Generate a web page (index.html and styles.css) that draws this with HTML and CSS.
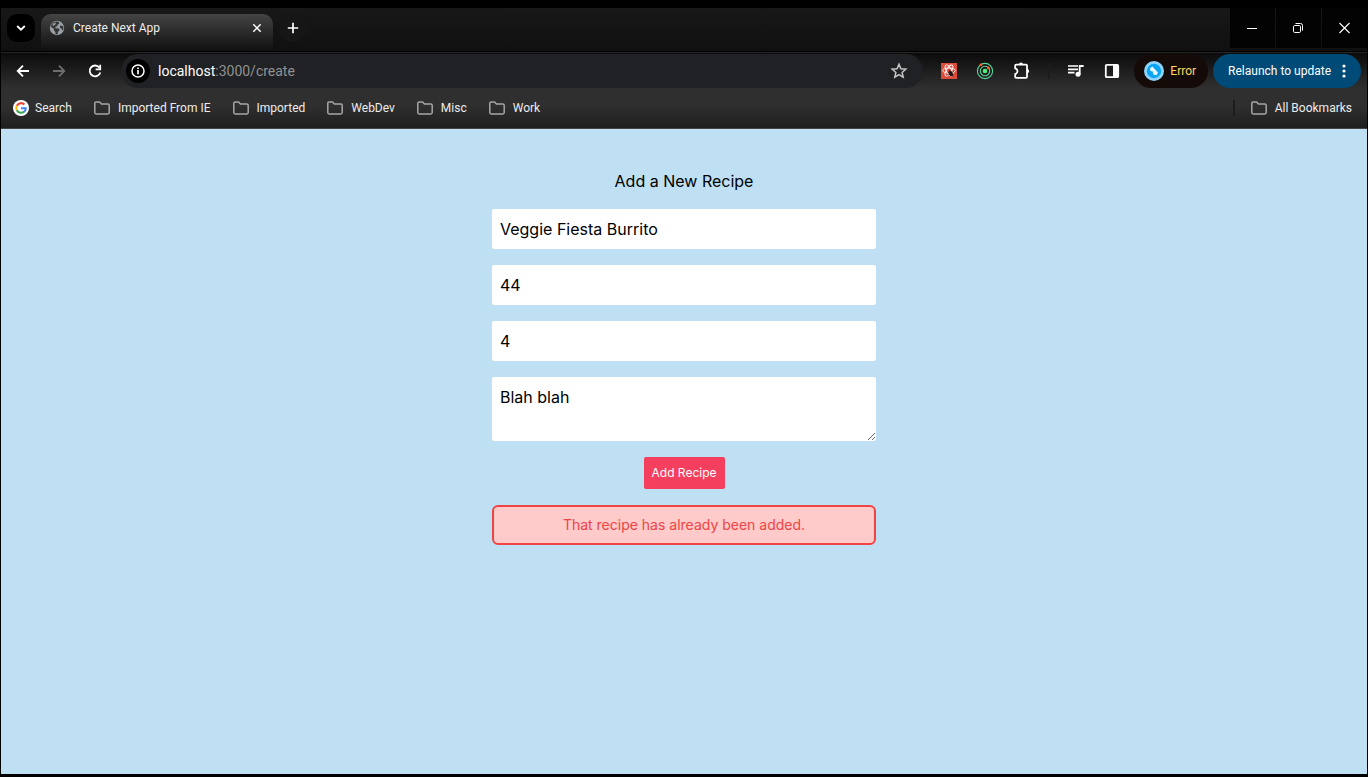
FILE: index.html
```html
<!DOCTYPE html>
<html lang="en">
<head>
<meta charset="utf-8">
<meta name="viewport" content="width=device-width, initial-scale=1">
<title>Create Next App</title>
<link rel="stylesheet" href="styles.css">
</head>
<body>
<svg class="sprite" aria-hidden="true">
  <symbol id="folder" viewBox="0 0 16 14"><path d="M.8 2.2Q.8.9 2.1.9H5.6L7.4 2.9H13.8Q15.2 2.9 15.2 4.3V11.6Q15.2 13 13.8 13H2.2Q.8 13 .8 11.6Z" fill="none" stroke="#a6a6a6" stroke-width="1.5" stroke-linejoin="round"/></symbol>
</svg>
<div class="window">
  <header class="chrome">
    <div class="tab-strip">
      <button class="tab-search" aria-label="Search tabs"><svg width="10" height="6" viewBox="0 0 10 6"><path d="M1.2 1 5 4.7 8.8 1" fill="none" stroke="#fff" stroke-width="1.8"/></svg></button>
      <div class="tab">
        <svg width="16" height="16" viewBox="0 0 16 16"><circle cx="8" cy="8" r="7.2" fill="#9aa0a6"/><path d="M7 1.6 9.8 1.7 10.2 3.6 8.3 5V6.3L6.4 6.8V8.2L9.8 8.6 10.7 10.3 9 11.8 8.6 14.4Q7.2 14.6 6.4 14V11.9L4.9 10.4V9L1.7 6.4Q2.7 2.6 7 1.6ZM11.6 5.2 14.2 6.4Q14.8 8.9 13.8 10.7L12.3 8.5 10.7 7.5Z" fill="#343536"/><path d="M4.2 3.4 6.9 2.6 6.4 4.6 4.8 5.7 3.2 5.3Z" fill="#9aa0a6"/></svg>
        <span class="tab-title">Create Next App</span>
        <button class="plain" aria-label="Close tab"><svg width="10" height="10" viewBox="0 0 10 10"><path d="M1.3 1.3 8.7 8.7M8.7 1.3 1.3 8.7" stroke="#fff" stroke-width="1.5"/></svg></button>
      </div>
      <button class="new-tab" aria-label="New tab"><svg width="12" height="12" viewBox="0 0 12 12"><path d="M6 .8V11.2M.8 6H11.2" stroke="#fff" stroke-width="1.7"/></svg></button>
      <div class="window-controls">
        <button aria-label="Minimize"><svg width="12" height="12" viewBox="0 0 12 12"><path d="M0 6.5H10" stroke="#fff"/></svg></button>
        <button aria-label="Restore"><svg width="12" height="12" viewBox="0 0 12 12"><g fill="none" stroke="#fff"><rect x=".5" y="3.5" width="7" height="7" rx="1.2"/><path d="M2.5 1.5H7.5Q9.5 1.5 9.5 3.5V8.5"/></g></svg></button>
        <button aria-label="Close"><svg width="12" height="12" viewBox="0 0 12 12"><path d="M.5 1 10.5 11M10.5 1 .5 11" stroke="#fff" stroke-width="1.1"/></svg></button>
      </div>
    </div>

    <div class="toolbar">
      <nav class="history" aria-label="History">
        <button aria-label="Back"><svg width="14" height="14" viewBox="0 0 14 14"><path d="M13 7H2M7 1.6 1.7 7 7 12.4" fill="none" stroke="#fff" stroke-width="1.8"/></svg></button>
        <button aria-label="Forward"><svg width="14" height="14" viewBox="0 0 14 14"><path d="M1 7H12M7 1.6 12.3 7 7 12.4" fill="none" stroke="#6e6e6e" stroke-width="1.8"/></svg></button>
        <button aria-label="Reload"><svg width="14" height="14" viewBox="0 0 14 14"><path d="M11.4 3.6A5.4 5.4 0 1 0 12.3 8.4" fill="none" stroke="#fff" stroke-width="1.8"/><path d="M12.2.8V5.3H7.6" fill="none" stroke="#fff" stroke-width="1.8"/></svg></button>
      </nav>
      <div class="omnibox">
        <button class="site-info" aria-label="View site information"><svg width="14" height="14" viewBox="0 0 14 14"><circle cx="7" cy="7" r="6" fill="none" stroke="#fff" stroke-width="1.5"/><path d="M7 6V10.3M7 3.5V5.1" stroke="#fff" stroke-width="1.7"/></svg></button>
        <div class="address" role="textbox" aria-label="Address"><span class="host">localhost</span>:3000/create</div>
        <button class="plain" aria-label="Bookmark this tab"><svg width="18" height="18" viewBox="0 0 18 18"><path d="M9 2.3 10.9 6.8 15.8 7.2 12.1 10.4 13.2 15.2 9 12.6 4.8 15.2 5.9 10.4 2.2 7.2 7.1 6.8Z" fill="none" stroke="#c4c7c5" stroke-width="1.5"/></svg></button>
      </div>
      <div class="extensions">
        <button aria-label="React extension"><svg width="16" height="16" viewBox="0 0 16 16"><path fill="#dd4b39" d="M0 0H16V16H0Z"/><g fill="none" stroke="#fff" stroke-width=".9"><ellipse cx="8" cy="7.5" rx="6.4" ry="2.5"/><ellipse cx="8" cy="7.5" rx="6.2" ry="2.5" transform="rotate(60 8 7.5)"/><ellipse cx="8" cy="7.5" rx="6.2" ry="2.5" transform="rotate(120 8 7.5)"/></g><ellipse cx="9.8" cy="10.6" rx="1.9" ry="2.8" fill="#2b1512" transform="rotate(-25 9.8 10.6)"/><path d="M6.4 9.2 13 12M6.8 12.4 12.8 8.2M8 7 12 13.5" stroke="#2b1512" stroke-width=".8"/></svg></button>
        <button aria-label="Orbit extension"><svg width="18" height="18" viewBox="0 0 18 18"><g fill="none" stroke="#56d99b" stroke-width="1.1"><circle cx="9" cy="9" r="7.6"/><circle cx="9" cy="9" r="4.7"/></g><circle cx="9" cy="9" r="2.3" fill="#4cf07c"/><circle cx="5" cy="2.8" r="1.4" fill="#ff5a1f"/><circle cx="12.2" cy="5.7" r="1.5" fill="#ff5a1f"/></svg></button>
        <button aria-label="Extensions"><svg width="18" height="18" viewBox="0 0 18 18"><path d="M2.2 3.6Q2.2 2.6 3.2 2.6H13Q14 2.6 14 3.6V14.8Q14 15.8 13 15.8H3.2Q2.2 15.8 2.2 14.8V12Q4.5 11.4 4.5 9.2T2.2 6.4Z" fill="none" stroke="#fff" stroke-width="1.8"/><path d="M5.9 2.6A2.1 2.1 0 0 1 10.1 2.6ZM14 7.1A2.1 2.1 0 0 1 14 11.3Z" fill="#fff"/></svg></button>
      </div>
      <span class="divider"></span>
      <div class="media">
        <button aria-label="Media controls"><svg width="16" height="14" viewBox="0 0 16 14"><path d="M0 2H10M0 5.3H10M0 8.6H6.5" stroke="#fff" stroke-width="1.7"/><circle cx="10" cy="10.3" r="2.5" fill="#fff"/><path d="M11.7 10.5V2H15.6" fill="none" stroke="#fff" stroke-width="1.8"/></svg></button>
        <button aria-label="Side panel"><svg width="16" height="16" viewBox="0 0 16 16"><rect x="1.8" y="1.8" width="12.4" height="12.4" rx="1" fill="none" stroke="#fff" stroke-width="1.8"/><path d="M9 1.5H14V14.5H9Z" fill="#fff"/></svg></button>
      </div>
      <button class="profile"><svg width="20" height="20" viewBox="0 0 20 20"><circle cx="10" cy="10" r="10" fill="#8fd3fb"/><circle cx="10" cy="10" r="7.2" fill="#08a5f4"/><path d="M6 7.3 8.4 5.5 14 11.5 12.6 14.3 9.3 13.6 8.8 10.5 6.4 10Z" fill="#e6f7ff"/></svg>Error</button>
      <button class="relaunch">Relaunch to update<svg width="4" height="14" viewBox="0 0 4 14"><g fill="#fff"><circle cx="2" cy="2" r="1.6"/><circle cx="2" cy="7" r="1.6"/><circle cx="2" cy="12" r="1.6"/></g></svg></button>
    </div>

    <nav class="bookmarks" aria-label="Bookmarks">
      <a class="search-link" href="#"><svg width="16" height="16" viewBox="0 0 16 16"><circle cx="8" cy="8" r="8" fill="#fff"/><g fill="none" stroke-width="2.1"><path d="M11.4 4.5A4.8 4.8 0 0 0 3.8 5.7" stroke="#ea4335"/><path d="M3.8 5.7A4.8 4.8 0 0 0 3.8 10.3" stroke="#fbbc05"/><path d="M3.8 10.3A4.8 4.8 0 0 0 11.2 11.6" stroke="#34a853"/><path d="M11.2 11.6A4.8 4.8 0 0 0 12.8 8.2H8" stroke="#4285f4"/></g></svg>Search</a>
      <button><svg width="16" height="14"><use href="#folder"/></svg>Imported From IE</button>
      <button><svg width="16" height="14"><use href="#folder"/></svg>Imported</button>
      <button><svg width="16" height="14"><use href="#folder"/></svg>WebDev</button>
      <button><svg width="16" height="14"><use href="#folder"/></svg>Misc</button>
      <button><svg width="16" height="14"><use href="#folder"/></svg>Work</button>
      <span class="divider push"></span>
      <button class="all"><svg width="16" height="14"><use href="#folder"/></svg>All Bookmarks</button>
    </nav>
  </header>

  <main class="page">
    <form class="recipe-form">
      <h1>Add a New Recipe</h1>
      <input type="text" aria-label="Recipe name" value="Veggie Fiesta Burrito">
      <input type="text" aria-label="Cooking time" value="44">
      <input type="text" aria-label="Servings" value="4">
      <textarea aria-label="Instructions" rows="2">Blah blah</textarea>
      <button class="submit" type="button">Add Recipe</button>
      <p class="error" role="alert">That recipe has already been added.</p>
    </form>
  </main>
</div>
</body>
</html>
```
FILE: styles.css
```css
* {
  box-sizing: border-box;
}

body {
  margin: 0;
  background: #000;
}

button,
input,
textarea {
  margin: 0;
  border: 0;
  font: inherit;
  color: inherit;
}

button {
  display: flex;
  align-items: center;
  justify-content: center;
  padding: 0;
  background: none;
  white-space: nowrap;
}

svg {
  display: block;
  flex: none;
}

.sprite {
  display: none;
}

.window {
  display: flex;
  flex-direction: column;
  min-height: 100vh;
  padding: 8px 1px 3px;
}

.chrome {
  color: #ececec;
  font: 12px/16px Roboto, "Noto Sans", sans-serif;
  background: linear-gradient(#0b0b0b 45px, #2f2f2f 80px, #2f2f2f 98px, #1e1e1e);
  border-bottom: 1px solid #444;
}

.tab-strip {
  display: flex;
  align-items: flex-start;
  height: 44px;
  padding-left: 6px;
  background: linear-gradient(#181818, #101010);
  border-bottom: 1px solid #000;
}

.tab-search {
  width: 28px;
  height: 28px;
  margin: 6px 6px 0 0;
  border-radius: 10px;
  background: #000;
}

.tab {
  display: flex;
  align-items: center;
  gap: 8px;
  width: 232px;
  height: 36px;
  margin-top: 6px;
  padding: 0 11px 8px 8px;
  border-radius: 10px 10px 0 0;
  background: linear-gradient(#444, #111);
}

.tab-title {
  flex: 1;
}

.new-tab {
  width: 28px;
  height: 28px;
  margin: 6px 0 0 6px;
  border-radius: 50%;
  background: #161616;
}

.window-controls {
  display: flex;
  gap: 1px;
  margin-left: auto;
}

.window-controls button {
  width: 45px;
  height: 40px;
  background: #030303;
}

.toolbar {
  display: flex;
  align-items: center;
  height: 36px;
  padding: 1px 6px 0 15px;
  border-top: 1px solid #262626;
}

.history {
  display: flex;
  gap: 22px;
  margin-right: 19px;
}

.omnibox {
  display: flex;
  flex: 1;
  align-items: center;
  height: 34px;
  padding: 0 15px 0 5px;
  border-radius: 17px;
  background: #202124;
}

.site-info {
  width: 24px;
  height: 24px;
  border-radius: 50%;
  background: #000;
}

.address {
  flex: 1;
  padding-left: 8px;
  color: #919191;
  font-size: 14px;
}

.host {
  color: #fff;
}

.extensions,
.media {
  display: flex;
  align-items: center;
  gap: 19px;
}

.extensions {
  margin: 0 17px 0 18px;
}

.media {
  gap: 20px;
  margin: 0 14px 0 18px;
}

.divider {
  width: 2px;
  height: 16px;
  background: #1c1c1c;
}

.profile {
  gap: 6px;
  height: 34px;
  padding: 0 12px 0 10px;
  border-radius: 17px;
  color: #fdd663;
  background: #140b09;
}

.relaunch {
  gap: 11px;
  height: 34px;
  margin-left: 5px;
  padding: 0 15px;
  border-radius: 17px;
  color: #fff;
  background: #004a77;
}

.bookmarks {
  display: flex;
  align-items: center;
  gap: 22px;
  height: 40px;
  padding: 0 15px 0 12px;
}

.bookmarks a,
.bookmarks button {
  display: flex;
  align-items: center;
  gap: 8px;
  color: inherit;
  text-decoration: none;
}

.bookmarks .search-link {
  gap: 6px;
}

.push {
  margin-left: auto;
}

.bookmarks .all {
  margin-left: -6px;
}

.page {
  flex: 1;
  padding: 40px 16px;
  color: #000;
  font: 16px/24px Inter, sans-serif;
  background: #bfe0f3;
}

.recipe-form {
  display: flex;
  flex-direction: column;
  align-items: center;
  gap: 16px;
  max-width: 384px;
  margin: 0 auto;
}

.recipe-form h1 {
  margin: 0;
  font: inherit;
}

.recipe-form input,
.recipe-form textarea {
  width: 100%;
  padding: 8px;
  border-radius: 2px;
  background: #fff;
}

.recipe-form textarea {
  display: block;
  height: 64px;
  resize: vertical;
}

.submit {
  padding: 8px;
  border-radius: 2px;
  color: #fff;
  font-size: 12px;
  line-height: 16px;
  background: #f43f5e;
}

.error {
  width: 100%;
  margin: 0;
  padding: 8px;
  border: 2px solid #ef4444;
  border-radius: 6px;
  color: #ef4444;
  font-size: 14px;
  line-height: 20px;
  text-align: center;
  background: #fecaca;
}
```
